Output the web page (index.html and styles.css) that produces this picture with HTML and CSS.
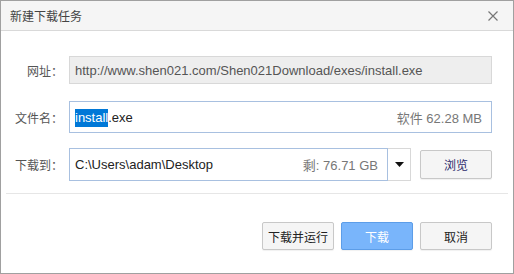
FILE: index.html
```html
<!DOCTYPE html>
<html lang="zh-CN">
<head>
  <meta charset="UTF-8" />
  <title>新建下载任务</title>
  <link rel="stylesheet" href="styles.css">
</head>
<body>
  <div class="dialog">
    <div class="titlebar">
      <span class="title">新建下载任务</span>
      <svg class="close" width="10" height="10" viewBox="0 0 10 10">
        <path d="M0.5 0.5 L9.5 9.5 M9.5 0.5 L0.5 9.5" stroke="#777" stroke-width="1.2" fill="none" />
      </svg>
    </div>

    <div class="form">
      <div class="row row-url">
        <span class="label">网址：</span>
        <div class="field field-readonly">http://www.shen021.com/Shen021Download/exes/install.exe</div>
      </div>

      <div class="row row-name">
        <span class="label">文件名：</span>
        <div class="field field-active">
          <span><span class="selected">install</span>.exe</span>
          <span class="hint">软件 62.28 MB</span>
        </div>
      </div>

      <div class="row row-path">
        <span class="label">下载到：</span>
        <div class="path-group">
          <div class="field field-active field-path">
            <span>C:\Users\adam\Desktop</span>
            <span class="hint">剩: 76.71 GB</span>
          </div>
          <div class="dropdown">
            <svg width="9" height="5" viewBox="0 0 9 5"><path d="M0 0 H9 L4.5 5 Z" fill="#111" /></svg>
          </div>
        </div>
        <button class="btn btn-browse">浏览</button>
      </div>
    </div>

    <div class="divider"></div>

    <div class="actions">
      <button class="btn">下载并运行</button>
      <button class="btn btn-primary">下载</button>
      <button class="btn">取消</button>
    </div>
  </div>
</body>
</html>
```

FILE: styles.css
```css
* {
  box-sizing: border-box;
}
body {
  margin: 0;
  font-family: "Liberation Sans", "Noto Sans CJK SC", sans-serif;
  font-size: 13px;
  color: #333;
  background: #fff;
}
.dialog {
  width: 514px;
  height: 274px;
  border: 1px solid #a0a0a0;
  background: #fff;
}
.titlebar {
  height: 30px;
  display: flex;
  align-items: center;
  justify-content: space-between;
  padding: 0 15px 0 9px;
  background: #f5f5f5;
  border-bottom: 1px solid #d9d9d9;
}
.title {
  font-size: 12px;
  color: #444;
}
.close {
  display: block;
}
.form {
  padding: 25px 21px 0 0;
}
.row {
  display: flex;
  align-items: center;
}
.label {
  width: 68px;
  padding-right: 6px;
  text-align: right;
  font-size: 12px;
  color: #555;
  flex-shrink: 0;
}
.field {
  flex: 1;
  display: flex;
  align-items: center;
  justify-content: space-between;
  padding: 0 9px 0 5px;
  white-space: nowrap;
}
.field-readonly {
  height: 28px;
  background: #eeeeee;
  border: 1px solid #d8d8d8;
  color: #555;
}
.field-active {
  height: 32px;
  background: #fff;
  border: 1px solid #a8c0e0;
  color: #222;
}
.row-name {
  margin-top: 17px;
}
.row-path {
  margin-top: 15px;
}
.selected {
  background: #0078d7;
  color: #fff;
  padding: 1px 0 2px;
}
.hint {
  color: #777;
}
.path-group {
  flex: 1;
  display: flex;
}
.field-path {
  height: 33px;
}
.dropdown {
  width: 23px;
  height: 33px;
  border: 1px solid #d8d8d8;
  border-left: none;
  display: flex;
  align-items: center;
  justify-content: center;
}
.dropdown svg {
  display: block;
}
.btn {
  width: 72px;
  height: 28px;
  padding: 0;
  font-family: inherit;
  font-size: 12px;
  color: #222;
  background: #f5f5f5;
  border: 1px solid #c8c8c8;
  border-radius: 2px;
  box-shadow: 0 1px 1px rgba(0, 0, 0, 0.06);
}
.btn-browse {
  height: 29px;
  margin-left: 9px;
  color: #2a2a6a;
}
.btn-primary {
  background: #79b5fb;
  border-color: #5c9de8;
  color: #fff;
}
.divider {
  height: 1px;
  margin: 12px 5px 0;
  background: #e6e6e6;
}
.actions {
  display: flex;
  justify-content: flex-end;
  gap: 7px;
  padding: 28px 21px 0 0;
}
```
